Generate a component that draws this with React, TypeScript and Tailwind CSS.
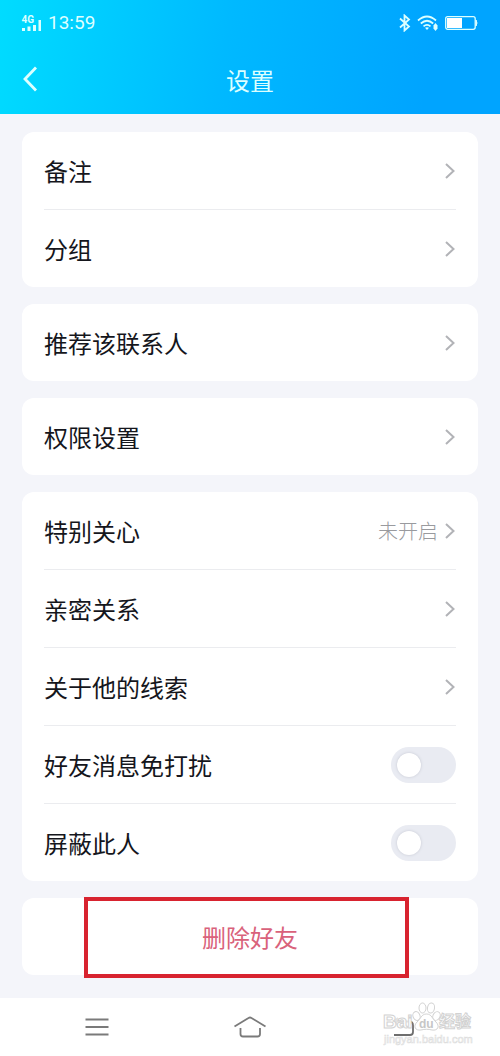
import type { ReactNode } from "react";

const Chevron = () => (
  <svg className="h-4 w-3 shrink-0" viewBox="0 0 12 16" fill="none" stroke="#b2b3b7" strokeWidth="2">
    <path d="M2 1l7.5 7L2 15" />
  </svg>
);

const Card = ({ children }: { children: ReactNode }) => (
  <section className="divide-y divide-[#ebecef] rounded-xl bg-white px-[22px]">{children}</section>
);

const LinkRow = ({ label, value }: { label: string; value?: string }) => (
  <div>
    <button type="button" className="flex h-[77px] w-full items-center justify-between text-left">
      <span className="text-2xl">{label}</span>
      <span className="flex items-center gap-1.5 text-xl font-light text-[#999a9e]">
        {value}
        <Chevron />
      </span>
    </button>
  </div>
);

const SwitchRow = ({ label }: { label: string }) => (
  <div>
    <label className="flex h-[77px] items-center justify-between">
      <span className="text-2xl">{label}</span>
      <input
        type="checkbox"
        role="switch"
        className="h-9 w-[65px] appearance-none rounded-full bg-[#e9ebf2] before:mt-1.5 before:ml-1.5 before:block before:size-6 before:rounded-full before:bg-white before:shadow-[0_0_3px_#c5c8d2] checked:bg-[#00a5ff] checked:before:ml-[35px]"
      />
    </label>
  </div>
);

const StatusBar = () => (
  <div className="flex h-[46px] items-center justify-between pr-[22px] pl-[21px] text-[#dcffff]">
    <div className="flex items-center gap-1.5">
      <svg className="h-5 w-[21px] overflow-visible" viewBox="0 0 21 20" fill="currentColor">
        <text x="0.500" y="10" fontSize="10" fontWeight="700" fontFamily="Roboto, sans-serif">
          4G
        </text>
        <path d="M1 15h3v3H1zM6.500 13.500h3V18h-3zM12 12h3v6h-3zM17.500 7h2.500v11h-2.500z" />
      </svg>
      <span className="font-[Roboto,sans-serif] text-[19px] leading-6">13:59</span>
    </div>
    <div className="flex items-center gap-1.5">
      <svg className="h-[18px] w-3" viewBox="0 0 12 18" fill="none" stroke="currentColor" strokeWidth="1.8">
        <path d="M1 4.500l9 8-4.500 4V1.500l4.500 4-9 8" />
      </svg>
      <svg className="h-4 w-[22px]" viewBox="0 0 22 16" fill="none" stroke="currentColor" strokeWidth="1.700">
        <path d="M1 5.500Q10 -2.500 19 5.500M3.800 8.500Q10 3 16.200 8.500M6.500 11.300Q10 8.300 13.500 11.300" />
        <path d="M8 12.800Q10 11.500 12 12.800L10 15z" fill="currentColor" stroke="none" />
        <path d="M18.500 8l2 2.500v3l-2 2.500-2-2.500v-3z" fill="currentColor" stroke="none" />
      </svg>
      <svg className="h-4 w-[33px]" viewBox="0 0 33 16" fill="none" stroke="currentColor">
        <rect x="0.700" y="1.700" width="29.500" height="12.600" rx="2" strokeWidth="1.300" />
        <rect x="2" y="3" width="15" height="10" fill="#fff" stroke="none" />
        <path d="M31 5q2 3 0 6z" fill="currentColor" />
      </svg>
    </div>
  </div>
);

const Watermark = () => (
  <svg
    className="pointer-events-none absolute right-[26px] bottom-[10px] h-[46px] w-[92px]"
    viewBox="0 0 92 46"
    fill="#fff"
    stroke="#d2d2d2"
    strokeWidth="1"
    fontFamily="'Liberation Sans', 'Noto Sans CJK SC', sans-serif"
  >
    <rect x="10" y="15" width="19" height="16" stroke="none" fillOpacity="0.800" />
    <text x="1" y="28" fontSize="19" fontWeight="700">
      Bai
    </text>
    <text x="57" y="27" fontSize="16" fontWeight="700">
      经验
    </text>
    <text x="2" y="43" fontSize="11" fill="#f6f6f6" fillOpacity="0.500" stroke="#dedede" strokeWidth="0.600">
      jingyan.baidu.com
    </text>
    <ellipse cx="34.500" cy="16" rx="3.500" ry="4.500" transform="rotate(-20 34.500 16)" />
    <ellipse cx="40.500" cy="8" rx="3.500" ry="5" />
    <ellipse cx="49" cy="8" rx="3.500" ry="5" transform="rotate(10 49 8)" />
    <ellipse cx="54.500" cy="16" rx="3.500" ry="4.500" transform="rotate(25 54.500 16)" />
    <path d="M44.500 14C39 14 39 19 35 22c-4 4-2 9 4 8 4-1 7-1 11 0 6 1 8-4 4-8-4-3-4-8-9.500-8z" />
    <text x="37" y="28" fontSize="12" fontWeight="700" fill="#c6c6c6" stroke="none">
      du
    </text>
  </svg>
);

const NavBar = () => (
  <nav className="relative flex h-[58px] items-center justify-between bg-white px-[81px]">
    <button type="button" aria-label="菜单" className="flex size-8 items-center justify-center">
      <svg className="h-5 w-6" viewBox="0 0 24 20" fill="none" stroke="#7a7a7a" strokeWidth="1.800">
        <path d="M0.500 2.500h23M0.500 10h23M0.500 17.500h23" />
      </svg>
    </button>
    <button type="button" aria-label="主页" className="flex size-8 items-center justify-center">
      <svg className="h-[22px] w-8 shrink-0" viewBox="0 0 32 22" fill="none" stroke="#7a7a7a" strokeWidth="1.800">
        <path d="M0.500 10.500L14.500 2Q16 1 17.500 2L31.500 10.500M6.500 12v6q0 2.500 2.500 2.500h14.500q2.500 0 2.500-2.500v-6" />
      </svg>
    </button>
    <button type="button" aria-label="返回" className="flex size-8 items-center justify-center">
      <svg className="h-5 w-6" viewBox="0 0 24 20" fill="none" stroke="#6e6e6e" strokeWidth="1.800">
        <path d="M7 1L3 4.500 7 8M3 4.500h15q4 0 4 4V15q0 3-3 3H3" />
      </svg>
    </button>
    <Watermark />
  </nav>
);

export default function App() {
  return (
    <div className="flex min-h-screen flex-col bg-[#f4f5fa] font-['Noto_Sans_CJK_SC',sans-serif] text-[#15161c]">
      <header className="h-[114px] bg-linear-[100deg,#00dcff_0%,#00b9ff_45%,#00a4ff_85%]">
        <StatusBar />
        <div className="grid h-[68px] grid-cols-[1fr_auto_1fr] items-center px-[22px] text-[#dcffff]">
          <button type="button" aria-label="返回" className="w-5">
            <svg className="h-7 w-4" viewBox="0 0 16 28" fill="none" stroke="currentColor" strokeWidth="2.800">
              <path d="M14 1.500L3 13l11 11.500" />
            </svg>
          </button>
          <h1 className="text-2xl">设置</h1>
        </div>
      </header>

      <main className="flex flex-1 flex-col gap-[17px] px-[22px] pt-[18px] pb-[22px]">
        <Card>
          <LinkRow label="备注" />
          <LinkRow label="分组" />
        </Card>
        <Card>
          <LinkRow label="推荐该联系人" />
        </Card>
        <Card>
          <LinkRow label="权限设置" />
        </Card>
        <Card>
          <LinkRow label="特别关心" value="未开启" />
          <LinkRow label="亲密关系" />
          <LinkRow label="关于他的线索" />
          <SwitchRow label="好友消息免打扰" />
          <SwitchRow label="屏蔽此人" />
        </Card>
        <div className="relative">
          <button type="button" className="block h-[77px] w-full rounded-xl bg-white text-2xl text-[#d9627b]">
            删除好友
          </button>
          <div className="pointer-events-none absolute -top-px right-[69px] -bottom-[3px] left-[62px] border-4 border-[#d8232f]" />
        </div>
      </main>

      <NavBar />
    </div>
  );
}
